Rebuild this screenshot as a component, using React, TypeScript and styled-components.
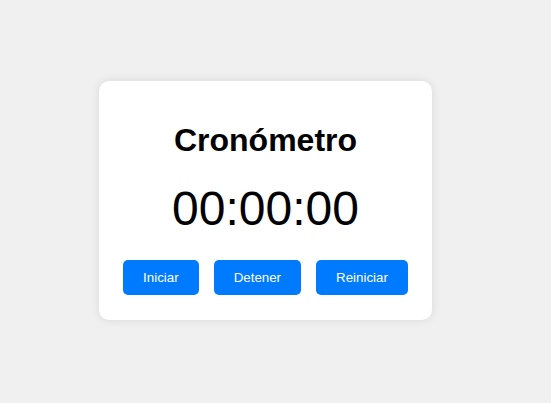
import { useEffect, useRef, useState } from 'react'
import styled, { createGlobalStyle } from 'styled-components'

const pad = (n: number) => String(n).padStart(2, '0')

const format = (secs: number) => {
  const h = Math.floor(secs / 3600)
  const m = Math.floor((secs % 3600) / 60)
  const s = secs % 60
  return `${pad(h)}:${pad(m)}:${pad(s)}`
}

const App = () => {
  const [seconds, setSeconds] = useState(0)
  const [running, setRunning] = useState(false)
  const timer = useRef<number | null>(null)

  useEffect(() => {
    if (!running) return
    timer.current = window.setInterval(() => setSeconds((s) => s + 1), 1000)
    return () => {
      if (timer.current) window.clearInterval(timer.current)
    }
  }, [running])

  const reset = () => {
    setRunning(false)
    setSeconds(0)
  }

  return (
    <>
      <GlobalStyle />
      <Page>
        <Card>
          <Title>Cronómetro</Title>
          <Display>{format(seconds)}</Display>
          <Buttons>
            <Button onClick={() => setRunning(true)}>Iniciar</Button>
            <Button onClick={() => setRunning(false)}>Detener</Button>
            <Button onClick={reset}>Reiniciar</Button>
          </Buttons>
        </Card>
      </Page>
    </>
  )
}

const GlobalStyle = createGlobalStyle`
  * {
    box-sizing: border-box;
  }
  body {
    margin: 0;
    background: #f0f0f0;
    font-family: 'Liberation Sans', Arial, sans-serif;
  }
`
const Page = styled.main`
  display: flex;
  justify-content: center;
  align-items: center;
  height: 403px;
  padding: 0 20px 2px 0;
`
const Card = styled.div`
  width: 333px;
  background: #fff;
  border-radius: 10px;
  box-shadow: 0 0 10px rgba(0, 0, 0, 0.1);
  padding: 41px 25px 25px;
  text-align: center;
`
const Title = styled.h1`
  margin: 0;
  font-size: 32px;
  font-weight: 700;
  color: #000;
`
const Display = styled.div`
  margin: 22px 0 24px;
  font-size: 48px;
  color: #000;
`
const Buttons = styled.div`
  display: flex;
  justify-content: center;
  gap: 15px;
`
const Button = styled.button`
  height: 35px;
  padding: 0 20px;
  border: none;
  border-radius: 5px;
  background: #007bff;
  color: #fff;
  font-family: 'Liberation Sans', Arial, sans-serif;
  font-size: 13.333px;
  cursor: pointer;
`

export default App
